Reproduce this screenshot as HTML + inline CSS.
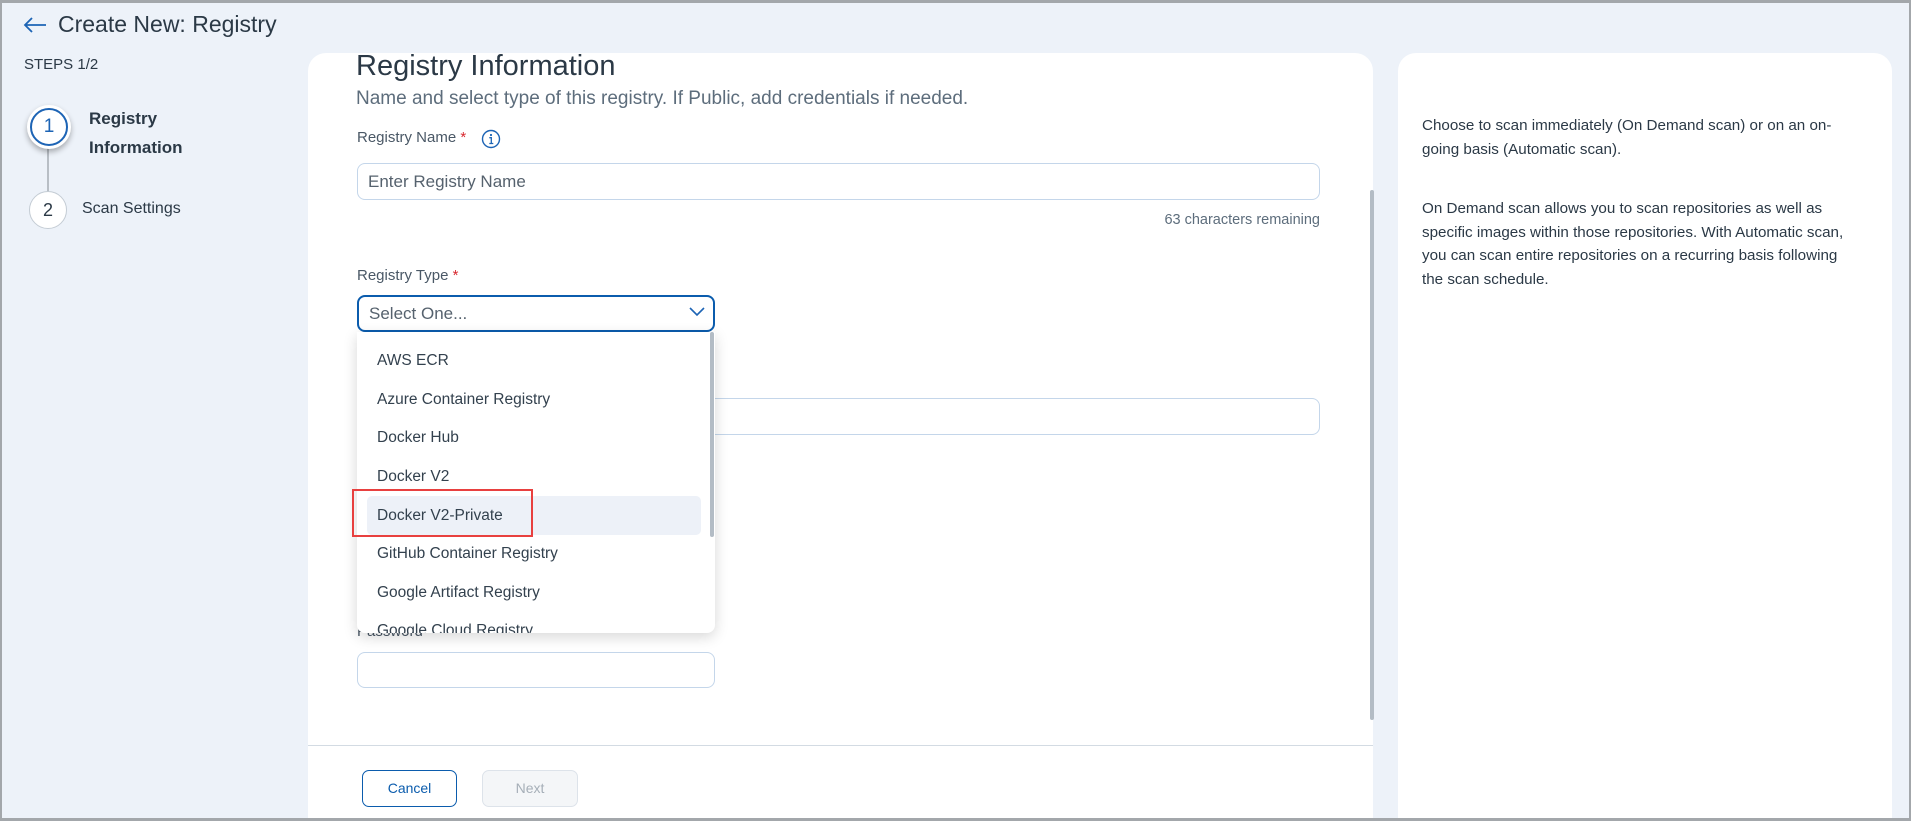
<!DOCTYPE html>
<html><head><meta charset="utf-8">
<style>
*{box-sizing:border-box;margin:0;padding:0}
html,body{width:1911px;height:821px;overflow:hidden}
body{background:#edf2f9;font-family:"Liberation Sans",Arial,sans-serif;color:#2b3946;position:relative}
.frame{position:absolute;left:0;top:0;width:1911px;height:821px;border:2px solid #a3a7ab;border-top-width:3px;border-bottom-width:3px;pointer-events:none;z-index:20}
.abs{position:absolute}
.card{position:absolute;background:#fff;border-radius:18px 18px 0 0}
.lbl{position:absolute;font-size:15px;color:#4a5866}
.inp{position:absolute;border:1px solid #c4d6ea;border-radius:8px;background:#fff}
.item{position:absolute;left:20px;font-size:15.5px;color:#33414e}
</style></head><body>
<div class="frame"></div>
<svg class="abs" style="left:22px;top:16px" width="26" height="18" viewBox="0 0 26 18"><path d="M24 9H3M10 2L3 9l7 7" fill="none" stroke="#1d64b5" stroke-width="1.8"/></svg>
<div class="abs" style="left:58px;top:11px;font-size:23px;color:#2b3946">Create New: Registry</div>
<div class="abs" style="left:24px;top:56px;font-size:15px;color:#2b3946">STEPS 1/2</div>
<div class="abs" style="left:47px;top:148px;width:2px;height:44px;background:#b8bec5"></div>
<div class="abs" style="left:27px;top:105px;width:44px;height:44px;border-radius:50%;background:#fff;box-shadow:0 3px 6px rgba(0,0,0,.3)"></div>
<div class="abs" style="left:30px;top:108px;width:38px;height:38px;border-radius:50%;border:2px solid #1d64b5;text-align:center;line-height:34px;font-size:19px;color:#1d64b5">1</div>
<div class="abs" style="left:89px;top:104px;font-size:17px;font-weight:bold;line-height:29px;color:#2b3946">Registry<br>Information</div>
<div class="abs" style="left:29px;top:191px;width:38px;height:38px;border-radius:50%;border:1px solid #c4ccd4;background:#fff;text-align:center;line-height:36px;font-size:18px;color:#2b3946">2</div>
<div class="abs" style="left:82px;top:200px;font-size:16px;color:#2b3946">Scan Settings</div>

<div class="card" style="left:308px;top:53px;width:1065px;height:768px"></div>
<div class="abs" style="left:356px;top:50px;font-size:29px;color:#2b3946">Registry Information</div>
<div class="abs" style="left:356px;top:88px;font-size:19px;color:#5d6d7c">Name and select type of this registry. If Public, add credentials if needed.</div>
<div class="lbl" style="left:357px;top:129px">Registry Name <span style="color:#d8282f">*</span></div>
<svg class="abs" style="left:481px;top:129px" width="20" height="20" viewBox="0 0 20 20"><circle cx="10" cy="10" r="8.5" fill="none" stroke="#1d64b5" stroke-width="1.4"/><circle cx="10" cy="6" r="1.1" fill="#1d64b5"/><path d="M8.3 8.7H10.3V14.5M8.3 14.5h4" fill="none" stroke="#1d64b5" stroke-width="1.3"/></svg>
<div class="inp" style="left:357px;top:163px;width:963px;height:37px"></div>
<div class="abs" style="left:368px;top:172px;font-size:17px;color:#56626e">Enter Registry Name</div>
<div class="abs" style="left:1120px;top:212px;width:200px;text-align:right;font-size:14.5px;color:#5d6d7c">63 characters remaining</div>
<div class="lbl" style="left:357px;top:267px">Registry Type <span style="color:#d8282f">*</span></div>
<div class="abs" style="left:357px;top:295px;width:358px;height:37px;border:2px solid #0b5cad;border-radius:8px;background:#fff"></div>
<div class="abs" style="left:369px;top:304px;font-size:17px;color:#56626e">Select One...</div>
<svg class="abs" style="left:688px;top:306px" width="18" height="12" viewBox="0 0 18 12"><path d="M2 2l7 7 7-7" fill="none" stroke="#1d64b5" stroke-width="1.6"/></svg>
<div class="inp" style="left:357px;top:398px;width:963px;height:37px"></div>
<div class="lbl" style="left:357px;top:623px">Password</div>
<div class="inp" style="left:357px;top:652px;width:358px;height:36px"></div>
<div class="abs" style="left:1370px;top:190px;width:4px;height:530px;background:#b3bcc5;border-radius:2px"></div>
<div class="abs" style="left:308px;top:745px;width:1065px;height:1px;background:#d3dbe3"></div>
<div class="abs" style="left:362px;top:770px;width:95px;height:37px;border:1.5px solid #0b5cad;border-radius:7px;text-align:center;line-height:34px;font-size:14px;color:#0b5cad">Cancel</div>
<div class="abs" style="left:482px;top:770px;width:96px;height:37px;border:1px solid #dde3ea;border-radius:7px;background:#f4f6f8;text-align:center;line-height:35px;font-size:14px;color:#a6afb8">Next</div>

<div class="abs" style="left:357px;top:332px;width:358px;height:301px;background:#fff;border-radius:0 0 8px 8px;box-shadow:0 4px 14px rgba(0,0,0,.16);overflow:hidden;z-index:5">
 <div class="abs" style="left:10px;top:164px;width:334px;height:39px;background:#edf1f8;border-radius:5px"></div>
 <div class="abs" style="left:353px;top:0;width:4px;height:205px;background:#b3bcc5;border-radius:2px"></div>
 <div class="item" style="top:20px">AWS ECR</div>
 <div class="item" style="top:59px">Azure Container Registry</div>
 <div class="item" style="top:97px">Docker Hub</div>
 <div class="item" style="top:136px">Docker V2</div>
 <div class="item" style="top:175px">Docker V2-Private</div>
 <div class="item" style="top:213px">GitHub Container Registry</div>
 <div class="item" style="top:252px">Google Artifact Registry</div>
 <div class="item" style="top:290px">Google Cloud Registry</div>
</div>
<div class="abs" style="left:352px;top:489px;width:181px;height:48px;border:2px solid #e8403f;z-index:6"></div>

<div class="card" style="left:1398px;top:53px;width:494px;height:768px"></div>
<div class="abs" style="left:1422px;top:114px;width:425px;font-size:15.2px;line-height:23.5px;color:#2b3946">Choose to scan immediately (On Demand scan) or on an on-going basis (Automatic scan).</div>
<div class="abs" style="left:1422px;top:197px;width:432px;font-size:15.2px;line-height:23.5px;color:#2b3946">On Demand scan allows you to scan repositories as well as specific images within those repositories. With Automatic scan, you can scan entire repositories on a recurring basis following the scan schedule.</div>
</body></html>
